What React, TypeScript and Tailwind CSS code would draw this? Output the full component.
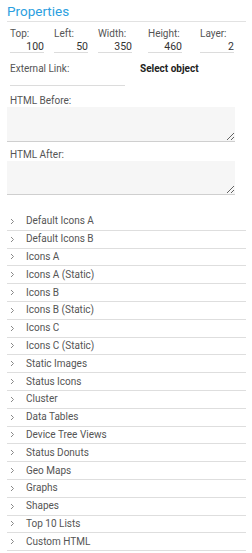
import React from 'react';

const fields = [
  { label: 'Top:', value: '100', ml: 'ml-0' },
  { label: 'Left:', value: '50', ml: 'ml-[10px]' },
  { label: 'Width:', value: '350', ml: 'ml-[10px]' },
  { label: 'Height:', value: '460', ml: 'ml-[16px]' },
  { label: 'Layer:', value: '2', ml: 'ml-[18px]' },
];

const groups = [
  'Default Icons A',
  'Default Icons B',
  'Icons A',
  'Icons A (Static)',
  'Icons B',
  'Icons B (Static)',
  'Icons C',
  'Icons C (Static)',
  'Static Images',
  'Status Icons',
  'Cluster',
  'Data Tables',
  'Device Tree Views',
  'Status Donuts',
  'Geo Maps',
  'Graphs',
  'Shapes',
  'Top 10 Lists',
  'Custom HTML',
];

function Chevron() {
  return (
    <svg width="5" height="7" viewBox="0 0 5 7" className="shrink-0">
      <polyline points="1,1 3.5,3.5 1,6" fill="none" stroke="#888" strokeWidth="1" />
    </svg>
  );
}

export default function App() {
  return (
    <div className="w-[252px] h-[553px] overflow-hidden bg-white pl-[7px] pr-[6px] text-[10px] leading-[12px] font-['Roboto',sans-serif]">
      <div className="pt-[2px] pb-[1px] border-b border-[#e2e2e2]">
        <h2 className="text-[13.5px] leading-[18px] text-[#2d9fe0]">Properties</h2>
      </div>

      <div className="pl-[3px]">
        <div className="flex mt-[5px]">
          {fields.map((f) => (
            <div key={f.label} className={`${f.ml} w-[34px] flex flex-col`}>
              <label className="text-[10px] leading-[13px] text-[#555] whitespace-nowrap">{f.label}</label>
              <input
                readOnly
                defaultValue={f.value}
                className="block w-[34px] h-[13px] text-right text-[10.5px] leading-[12px] text-[#333] border-b border-[#dcdcdc] bg-transparent outline-none"
              />
            </div>
          ))}
        </div>

        <div className="flex mt-[9px]">
          <div className="w-[115px]">
            <label className="block text-[10px] leading-[13px] text-[#555]">External Link:</label>
            <input readOnly className="block w-[115px] h-[11px] border-b border-[#dcdcdc] bg-transparent outline-none" />
          </div>
          <div className="ml-[15px] text-[10px] leading-[13px] font-bold text-[#222]">Select object</div>
        </div>

        <label className="block mt-[9px] text-[10px] leading-[12px] text-[#555]">HTML Before:</label>
      </div>
      <textarea className="block w-[228px] h-[35px] bg-[#f6f6f6] border-b border-[#cfcfcf] outline-none" />

      <label className="block mt-[7px] pl-[3px] text-[10px] leading-[12px] text-[#555]">HTML After:</label>
      <textarea className="block w-[228px] h-[34px] bg-[#f6f6f6] border-b border-[#cfcfcf] outline-none" />

      <ul className="mt-[18px]">
        {groups.map((g) => (
          <li key={g} className="h-[17.8px] flex items-center border-b border-[#dedede] pl-[3px]">
            <Chevron />
            <span className="ml-[11px] text-[10px] leading-[12px] text-[#555]">{g}</span>
          </li>
        ))}
      </ul>
    </div>
  );
}
